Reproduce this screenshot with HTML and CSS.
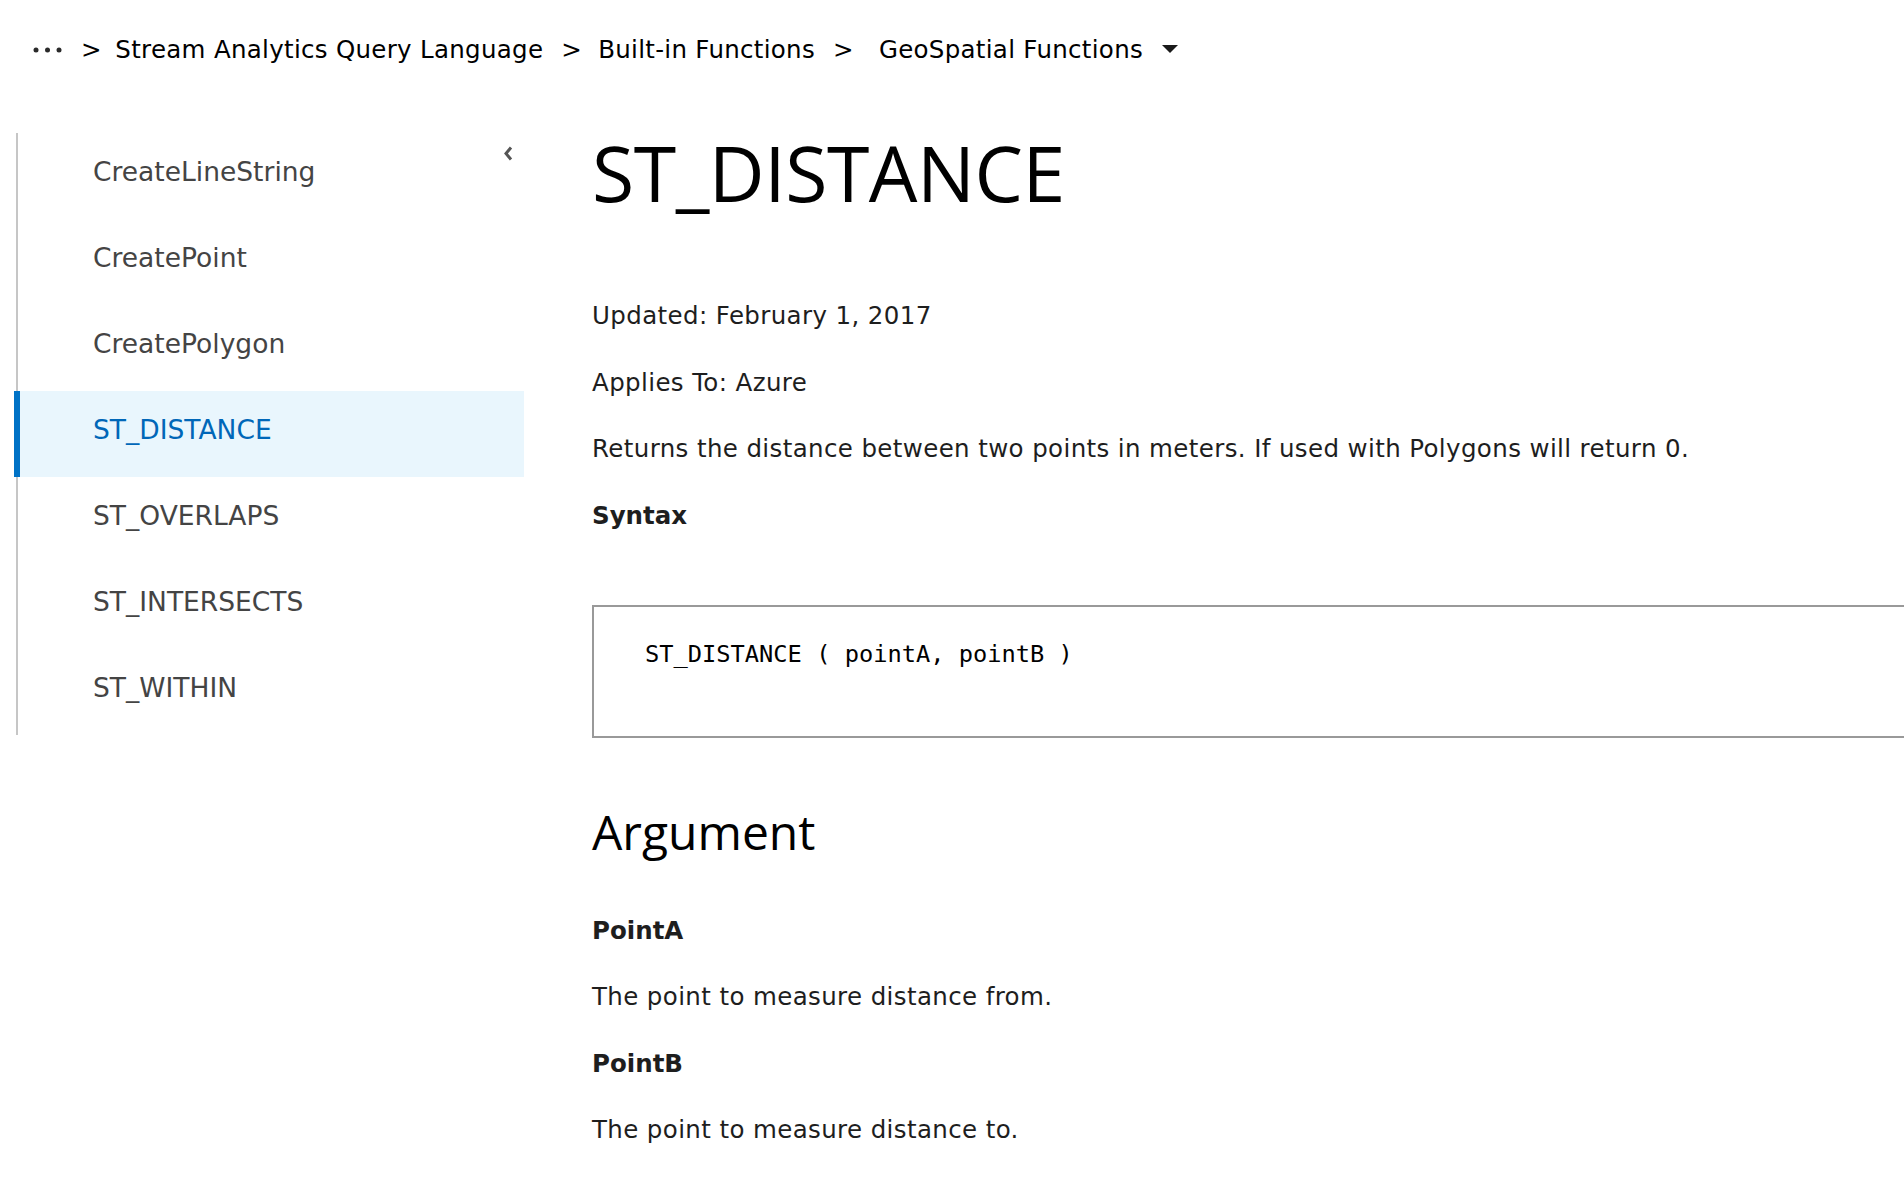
FILE: index.html
```html
<!DOCTYPE html>
<html lang="en">
<head>
<meta charset="utf-8">
<title>ST_DISTANCE</title>
<link rel="stylesheet" href="styles.css">
</head>
<body>
<div class="page">
  <nav class="crumbs">
    <svg class="more" width="29" height="6" viewBox="0 0 29 6"><circle cx="3" cy="3" r="2.5"/><circle cx="14.5" cy="3" r="2.5"/><circle cx="26" cy="3" r="2.5"/></svg>
    <span class="sep sep-first">&gt;</span>
    <a class="crumb">Stream Analytics Query Language</a>
    <span class="sep">&gt;</span>
    <a class="crumb">Built-in Functions</a>
    <span class="sep sep-last">&gt;</span>
    <a class="crumb">GeoSpatial Functions</a>
    <svg class="caret" width="16" height="8" viewBox="0 0 16 8"><path d="M0 0 H16 L8 8 Z"/></svg>
  </nav>

  <div class="layout">
    <aside class="sidebar">
      <svg class="collapse" width="10" height="17" viewBox="0 0 10 17"><path d="M8 2.5 L3 8.5 L8 14.5" fill="none" stroke="#555" stroke-width="3"/></svg>
      <ul class="toc">
        <li class="toc-item">CreateLineString</li>
        <li class="toc-item">CreatePoint</li>
        <li class="toc-item">CreatePolygon</li>
        <li class="toc-item active">ST_DISTANCE</li>
        <li class="toc-item">ST_OVERLAPS</li>
        <li class="toc-item">ST_INTERSECTS</li>
        <li class="toc-item">ST_WITHIN</li>
      </ul>
    </aside>

    <main class="content">
      <h1 class="title">ST_DISTANCE</h1>
      <p class="para">Updated: February 1, 2017</p>
      <p class="para">Applies To: Azure</p>
      <p class="para">Returns the distance between two points in meters. If used with Polygons will return 0.</p>
      <p class="para label">Syntax</p>
      <pre class="code">ST_DISTANCE ( pointA, pointB )</pre>
      <h2 class="section">Argument</h2>
      <p class="para label">PointA</p>
      <p class="para">The point to measure distance from.</p>
      <p class="para label">PointB</p>
      <p class="para">The point to measure distance to.</p>
    </main>
  </div>
</div>
</body>
</html>
```

FILE: styles.css
```css
html, body {
  margin: 0;
  padding: 0;
  background: #ffffff;
}

body {
  font-family: "DejaVu Sans", "Open Sans", sans-serif;
  color: #1e1e1e;
  overflow: hidden;
}

.page {
  width: 1904px;
  min-height: 1178px;
  overflow: hidden;
}

/* breadcrumb */
.crumbs {
  height: 98px;
  display: flex;
  align-items: center;
  padding-left: 33px;
  font-size: 24.5px;
  letter-spacing: 0.3px;
  color: #000;
}

.more {
  fill: #2a2a2a;
  margin-top: 1px;
}

.sep {
  margin: 0 16px 0 18px;
}

.sep-first {
  margin: 0 13.5px 0 19px;
}

.sep-last {
  margin-right: 25px;
}

.crumb {
  color: #000;
  text-decoration: none;
}

.caret {
  margin-left: 19px;
  fill: #1a1a1a;
}

/* layout */
.layout {
  display: flex;
  align-items: flex-start;
  padding-top: 35px;
}

.sidebar {
  position: relative;
  width: 510px;
  margin-left: 14px;
  flex: none;
}

.collapse {
  position: absolute;
  right: 11px;
  top: 12px;
}

.toc {
  list-style: none;
  margin: 0 0 0 2px;
  padding: 0;
  border-left: 2px solid #c6c6c6;
}

.toc-item {
  height: 86px;
  box-sizing: border-box;
  display: flex;
  align-items: center;
  padding: 0 0 10px 75px;
  font-family: "DejaVu Sans", sans-serif;
  font-size: 26.5px;
  color: #444444;
}

.toc-item.active {
  background: #e9f6fd;
  color: #0067b8;
  border-left: 6px solid #0072c6;
  margin-left: -4px;
  padding-left: 73px;
}

/* content */
.content {
  margin-left: 68px;
  flex: 1;
  min-width: 0;
}

.title {
  font-family: "Open Sans", sans-serif;
  font-size: 77px;
  font-weight: 400;
  line-height: 80px;
  margin: 0 0 86px 0;
  color: #000;
  letter-spacing: -0.5px;
}

.para {
  font-size: 24.5px;
  letter-spacing: 0.38px;
  line-height: 34px;
  margin: 0 0 32.5px 0;
}

.label {
  font-weight: 700;
  letter-spacing: 0;
}

.code {
  margin: 72px 0 64px 0;
  width: 1600px;
  border: 2px solid #999;
  padding: 33px 0 68px 51px;
  font-family: "DejaVu Sans Mono", monospace;
  font-size: 23.7px;
  line-height: 28px;
  color: #000;
}

.section {
  font-family: "Open Sans", sans-serif;
  font-size: 48px;
  font-weight: 400;
  line-height: 60px;
  margin: 0 0 52px 0;
  color: #000;
}
```
